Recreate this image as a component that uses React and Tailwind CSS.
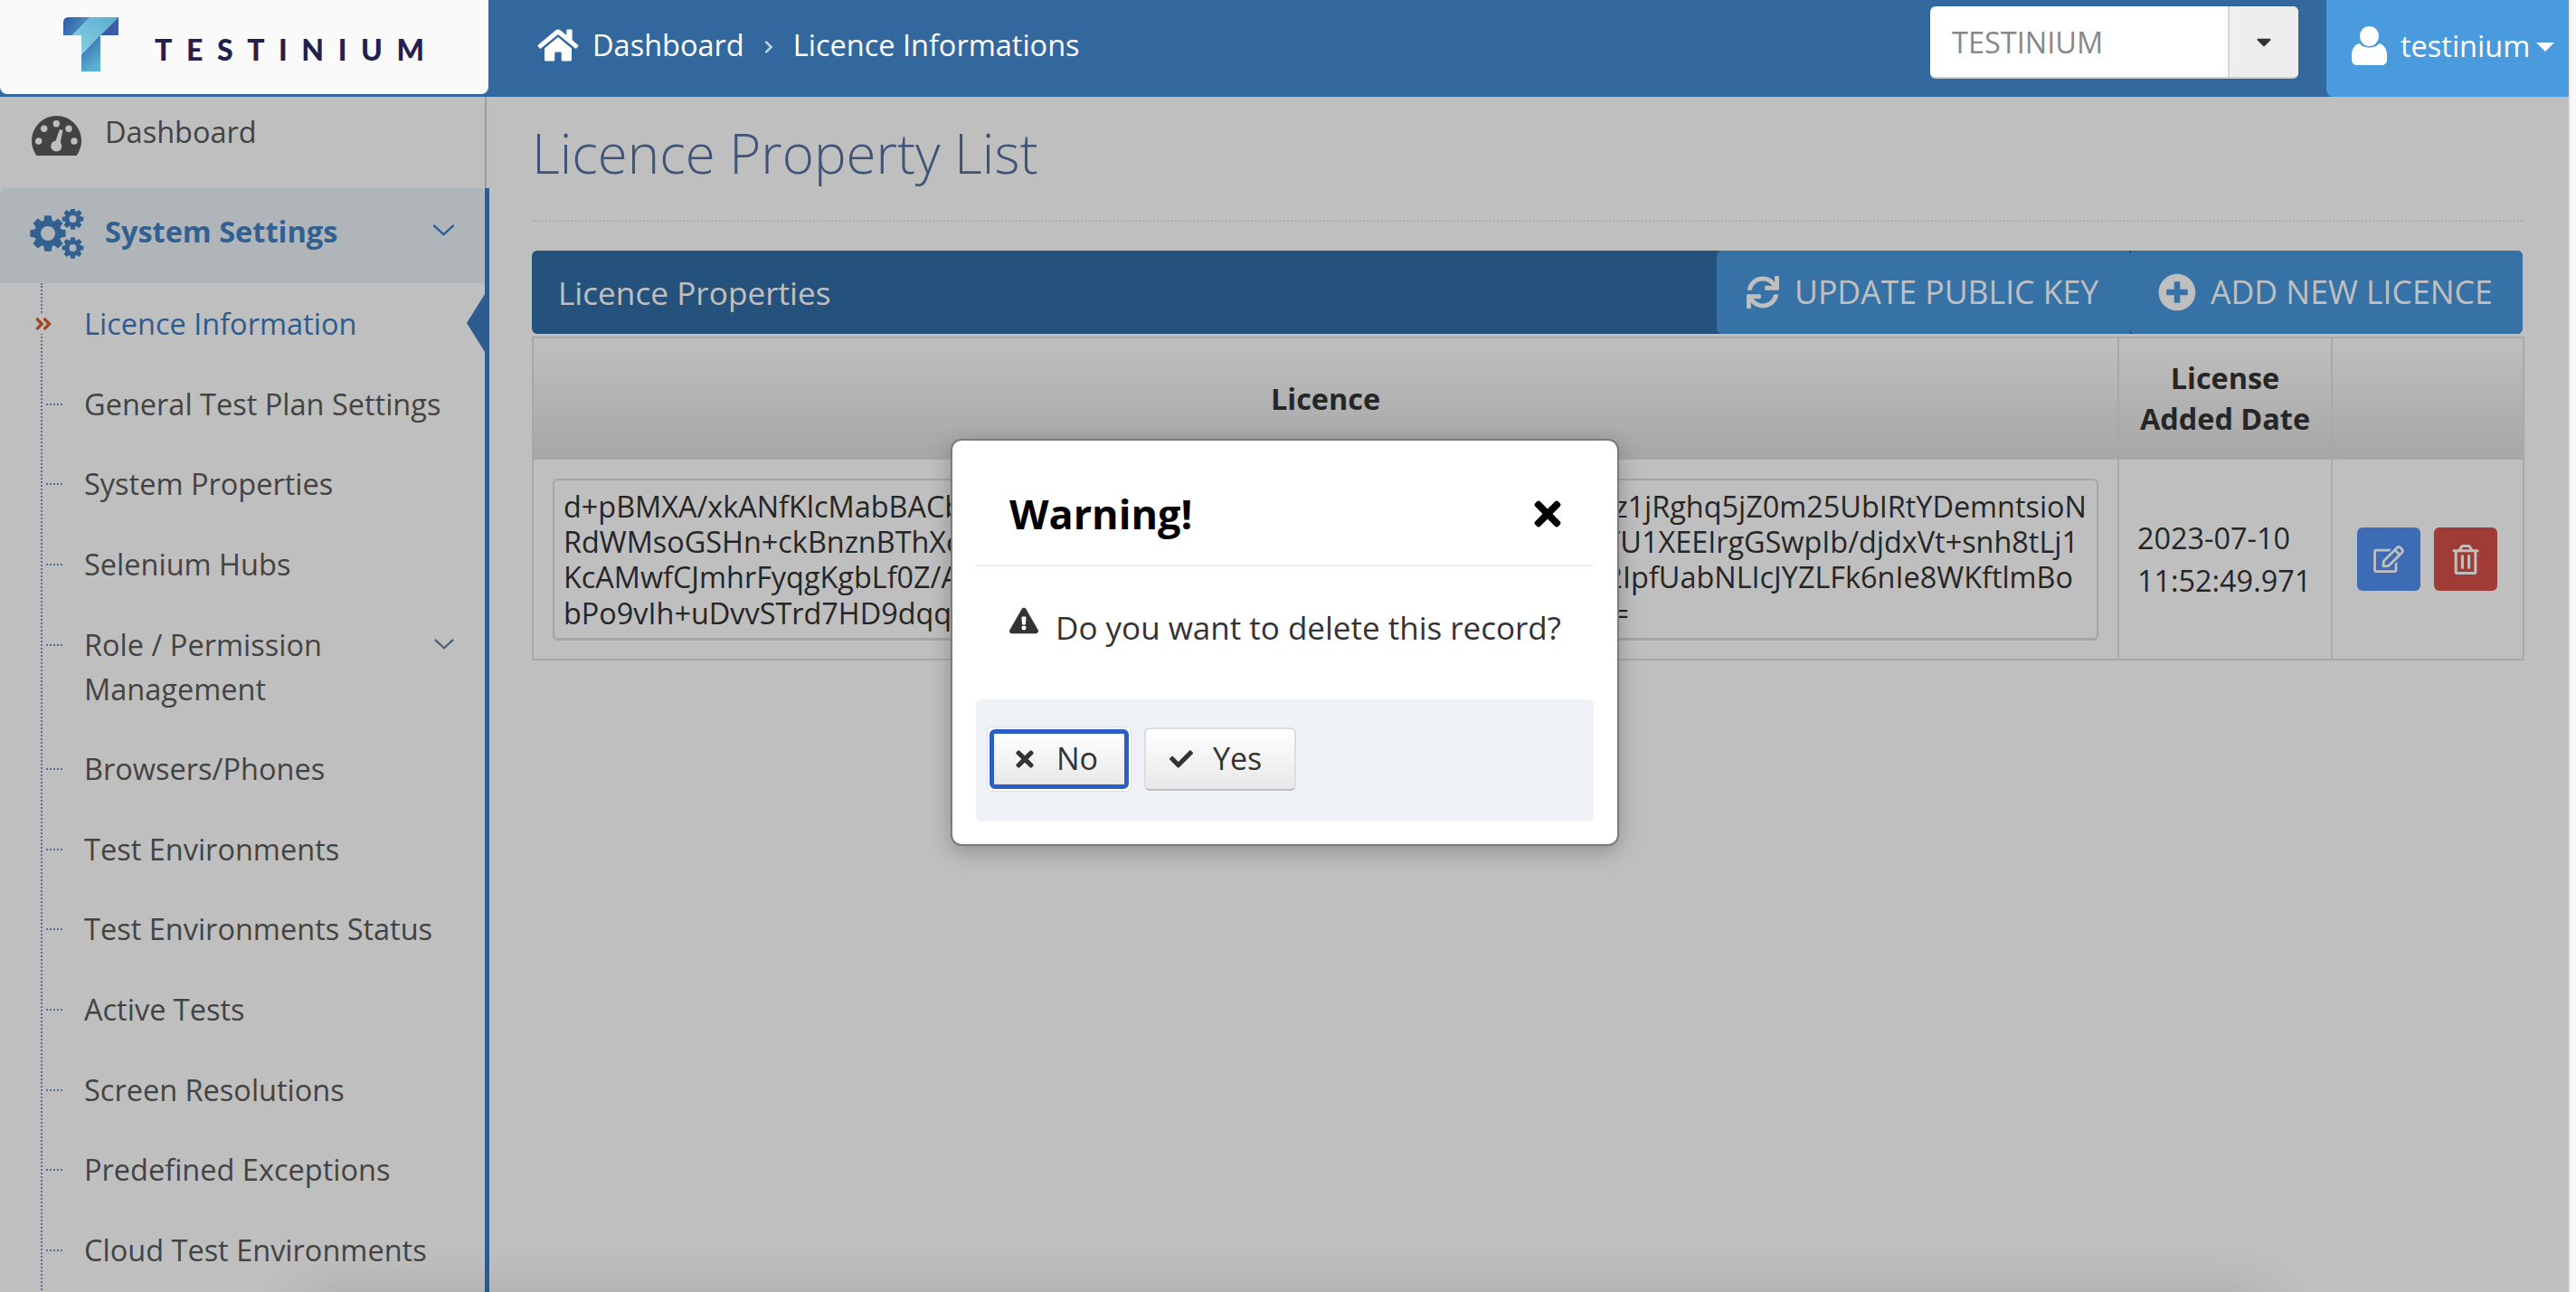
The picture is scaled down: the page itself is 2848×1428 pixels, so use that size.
import React from "react";
import {
  FaHome, FaSync, FaPlusCircle, FaRegEdit, FaRegTrashAlt,
  FaExclamationTriangle, FaTimes, FaCheck, FaChevronRight, FaCaretDown, FaAngleDoubleRight,
} from "react-icons/fa";

const items = [
  ["General Test Plan Settings"],
  ["System Properties"],
  ["Selenium Hubs"],
  ["Role / Permission Management", true],
  ["Browsers/Phones"],
  ["Test Environments"],
  ["Test Environments Status"],
  ["Active Tests"],
  ["Screen Resolutions"],
  ["Predefined Exceptions"],
  ["Cloud Test Environments"],
];

const keyLines = [
  ["d+pBMXA/xkANfKlcMabBACb", "z1jRghq5jZ0m25UbIRtYDemntsioN", "pr-[11px]"],
  ["RdWMsoGSHn+ckBnznBThXc", "TU1XEEIrgGSwpIb/djdxVt+snh8tLj1", "pr-[20px]"],
  ["KcAMwfCJmhrFyqgKgbLf0Z/A", "2IpfUabNLIcJYZLFk6nIe8WKftlmBo", "pr-[26px]"],
  ["bPo9vIh+uDvvSTrd7HD9dqq", "=", "pr-[517px]"],
];

function gearPath(cx, cy, ro, ri, hole, teeth) {
  const pts = [];
  const step = (Math.PI * 2) / teeth;
  for (let i = 0; i < teeth; i++) {
    const a = i * step - Math.PI / 2;
    [
      [ri, -0.5],
      [ro, -0.3],
      [ro, 0.3],
      [ri, 0.5],
    ].forEach(([r, k]) => {
      const t = a + k * step * 0.8;
      pts.push((cx + r * Math.cos(t)).toFixed(2) + " " + (cy + r * Math.sin(t)).toFixed(2));
    });
  }
  return (
    "M" + pts.join("L") + "Z" +
    `M${cx - hole} ${cy}a${hole} ${hole} 0 1 0 ${hole * 2} 0a${hole} ${hole} 0 1 0 ${-hole * 2} 0Z`
  );
}

function CogsIcon({ className }) {
  return (
    <svg viewBox="0 0 60 55" className={className} fill="currentColor" fillRule="evenodd">
      <path d={gearPath(20, 27, 20, 15, 8, 8)} />
      <path d={gearPath(47.5, 11, 12, 9, 4, 8)} />
      <path d={gearPath(47.5, 43, 12, 9, 4, 8)} />
    </svg>
  );
}

function GaugeIcon({ className }) {
  return (
    <svg viewBox="0 0 55 44" className={className}>
      <path d="M5.5 44 A27.5 27.5 0 1 1 49.5 44 Z" fill="currentColor" />
      <g fill="#ffffff">
        <circle cx="7.7" cy="28" r="3.7" />
        <circle cx="13.7" cy="14.3" r="3.7" />
        <circle cx="27.3" cy="8.7" r="3.7" />
        <circle cx="41" cy="14.3" r="3.7" />
        <circle cx="47" cy="28" r="3.7" />
        <circle cx="27.3" cy="33.5" r="6" />
        <path d="M31 15 L34.5 16 L31 33 L25 32 Z" />
      </g>
    </svg>
  );
}

function Chevron({ className }) {
  return (
    <svg viewBox="0 0 26 14" className={className} fill="none" stroke="currentColor" strokeWidth="2.6">
      <path d="M1 1 L13 12 L25 1" />
    </svg>
  );
}

function Logo() {
  return (
    <svg viewBox="0 0 61 60" className="w-[61px] h-[60px] shrink-0">
      <defs>
        <linearGradient id="a" x1="0" y1="0" x2="1" y2="0.4">
          <stop offset="0" stopColor="#2f55a5" />
          <stop offset="1" stopColor="#4d9cc6" />
        </linearGradient>
        <linearGradient id="b" x1="0" y1="1" x2="1" y2="0">
          <stop offset="0" stopColor="#8fcfe2" />
          <stop offset="1" stopColor="#58aed0" />
        </linearGradient>
        <linearGradient id="c" x1="0" y1="0" x2="0.4" y2="1">
          <stop offset="0" stopColor="#3560a9" />
          <stop offset="1" stopColor="#58b2d2" />
        </linearGradient>
      </defs>
      <path d="M6 0 H30 L10 20 H0 V6 Q0 0 6 0 Z" fill="url(#a)" />
      <polygon points="30,0 61,0 41,20 41,21 20,40 20,20 10,20" fill="url(#b)" />
      <polygon points="61,0 61,20 41,20" fill="#3a5ca9" />
      <polygon points="41,20 41,60 20,60 20,41" fill="url(#c)" />
    </svg>
  );
}

function UserIcon() {
  return (
    <svg viewBox="0 0 39 43" className="w-[39px] h-[43px]" fill="white">
      <ellipse cx="19.5" cy="11" rx="10.5" ry="11" />
      <path d="M9 19 C12 25 27 25 30 19 C35 20 39 24 39 32 V37 C39 41 36 43 33 43 H6 C3 43 0 41 0 37 V32 C0 24 4 20 9 19 Z" />
    </svg>
  );
}

export default function App() {
  return (
    <div className="relative flex w-[2848px] h-[1428px] overflow-hidden bg-white font-['Open_Sans',sans-serif]">
      <div className="w-[2840px] shrink-0 flex flex-col">
        {/* Top bar */}
        <header className="relative z-20 flex h-[107px] shrink-0 bg-[#33689e] text-white">
          <div className="w-[540px] h-[104px] shrink-0 flex items-start pl-[70px] pt-[19px] bg-[#fafafa] rounded-b-lg">
            <Logo />
            <span className="ml-[40px] mt-[18px] text-[32px] leading-[36px] font-black tracking-[15.6px] text-[#231f4e] font-['Lato',sans-serif]">
              TESTINIUM
            </span>
          </div>
          <nav className="flex items-center h-[100px] pl-[54px] text-[32.5px]">
            <FaHome className="w-[46px] h-[40px] mr-[15px]" />
            <span>Dashboard</span>
            <FaChevronRight className="w-[14px] h-[16px] mx-[20px] mt-[4px] text-[#c6d4e3]" />
            <span>Licence Informations</span>
          </nav>
          <div className="ml-auto mt-[7px] w-[407px] h-[80px] flex rounded-md bg-white border-b-2 border-[#cccccc] overflow-hidden">
            <span className="flex-1 pl-[24px] leading-[80px] text-[32.5px] text-[#888888]">TESTINIUM</span>
            <span className="w-[78px] flex items-center justify-center bg-[#eeeeee] border-l-2 border-[#d8d8d8]">
              <FaCaretDown className="w-[26px] h-[26px] text-[#333333]" />
            </span>
          </div>
          <div className="ml-[31px] w-[268px] flex items-start pl-[28px] pt-[29px] bg-[#4a9bde] rounded-bl-lg">
            <UserIcon />
            <span className="ml-[15px] text-[32.5px] leading-[44px]">testinium</span>
            <span className="ml-[7px] mt-[18px] w-0 h-0 border-x-[10px] border-t-[10px] border-x-transparent border-t-white" />
          </div>
        </header>

        <div className="flex flex-1 min-h-0">
          {/* Sidebar */}
          <aside className="w-[541px] shrink-0 text-[32.5px] leading-[49px] text-[#5a5a5a]">
            <div className="flex h-[101px] pl-[35px] pt-[14px] border-r-2 border-r-[#d0d0d0] mr-[3px]">
              <GaugeIcon className="w-[55px] h-[44px] mt-[7px] text-[#5a5a5a]" />
              <span className="ml-[26px]">Dashboard</span>
            </div>
            <div className="border-r-[5px] border-[#3f7bc0] h-full">
              <div className="flex items-center h-[105px] pl-[33px] pr-[33px] bg-[#ebf2f8] rounded-t-md text-[#4280c2]">
                <CogsIcon className="w-[60px] h-[55px] -mt-[5px]" />
                <span className="ml-[23px] -mt-[10px] font-bold flex-1">System Settings</span>
                <Chevron className="w-[25px] h-[13px] -mt-[12px]" />
              </div>
              <ul className="relative ml-[45px] border-l-2 border-dotted border-[#6f94c4]">
                <li className="relative flex items-center h-[89px] py-[20px] text-[#3f7bc0]">
                  <FaAngleDoubleRight className="absolute left-[-10px] w-[22px] h-[22px] bg-white text-[#d95f30]" />
                  <span className="ml-[46px]">Licence Information</span>
                  <span className="absolute right-0 top-[12px] w-0 h-0 border-y-[32px] border-r-[20px] border-y-transparent border-r-[#3f7bc0]" />
                </li>
                {items.map(([label, sub]) => (
                  <li key={label} className="flex items-start py-[19.8px]">
                    <span className="w-[18px] ml-[4px] mt-[24px] border-t-2 border-dotted border-[#6f94c4] shrink-0" />
                    <span className="ml-[24px] flex-1 whitespace-normal">{label}</span>
                    {sub && <Chevron className="w-[22px] h-[12px] mt-[18px] ml-[60px] mr-[34px] shrink-0 text-[#6b8199]" />}
                  </li>
                ))}
              </ul>
            </div>
          </aside>

          {/* Content */}
          <main className="flex-1 min-w-0 pl-[47px] pr-[51px]">
            <h1 className="pt-[32px] pb-[44px] text-[60px] leading-[60px] font-light text-[#54719f] border-b-2 border-dotted border-[#e4e4e4]">
              Licence Property List
            </h1>
            <div className="mt-[32px] flex h-[92px] items-stretch bg-[#326ca7] rounded-md text-[35.6px] text-white">
              <span className="flex-1 pl-[29px] leading-[92px] text-[35.2px]">Licence Properties</span>
              <span className="w-[456px] flex items-center pl-[33px] bg-[#4898dd] rounded-l-md">
                <FaSync className="w-[36px] h-[36px] mr-[17px]" />
                UPDATE PUBLIC KEY
              </span>
              <span className="w-[435px] flex items-center pl-[32px] bg-[#4898dd] rounded-md">
                <FaPlusCircle className="w-[42px] h-[42px] mr-[16px]" />
                ADD NEW LICENCE
              </span>
            </div>
            <table className="mt-[3px] w-[2201px] table-fixed border-collapse text-[#333333] text-[32.4px]">
              <colgroup>
                <col className="w-[1753px]" />
                <col className="w-[236px]" />
                <col className="w-[212px]" />
              </colgroup>
              <thead>
                <tr className="h-[134px]">
                  {["Licence", "License Added Date", ""].map((h) => (
                    <th key={h} className="px-[18px] text-center font-bold leading-[45px] border-2 border-[#e0e0e0] rounded-t-md bg-linear-to-b from-[#ffffff] to-[#dfdfdf]">
                      {h}
                    </th>
                  ))}
                </tr>
              </thead>
              <tbody>
                <tr className="h-[222px]">
                  <td className="px-[21px] border-2 border-[#e0e0e0]">
                    <div className="h-[179px] pl-[10px] pt-[9px] border-2 border-b-[3px] border-[#dcdcdc] rounded-md leading-[39.4px] whitespace-nowrap">
                      {keyLines.map(([a, b, pr]) => (
                        <div key={a} className={"flex justify-between " + pr}>
                          <span>{a}</span>
                          <span>{b}</span>
                        </div>
                      ))}
                    </div>
                  </td>
                  <td className="px-[20px] border-2 border-[#e0e0e0] leading-[47px] whitespace-nowrap">
                    2023-07-10<br />11:52:49.971
                  </td>
                  <td className="border-2 border-[#e0e0e0]">
                    <div className="flex justify-center gap-[15px] pr-[2px] text-white">
                      <span className="w-[70px] h-[70px] flex items-center justify-center rounded-md bg-[#5291f1]">
                        <FaRegEdit className="w-[36px] h-[30px]" />
                      </span>
                      <span className="w-[70px] h-[70px] flex items-center justify-center rounded-md bg-[#d55047]">
                        <FaRegTrashAlt className="w-[30px] h-[33px]" />
                      </span>
                    </div>
                  </td>
                </tr>
              </tbody>
            </table>
          </main>
        </div>
      </div>
      {/* Scrollbar track */}
      <div className="flex-1 bg-[#f9f9f9] border-l-2 border-[#ececec]" />

      {/* Backdrop */}
      <div className="absolute z-10 left-0 top-[107px] w-[2840px] bottom-0 bg-black/25 overflow-hidden">
        <div className="absolute left-[340px] top-[1330px] w-[2160px] h-[40px] shadow-[0_0_60px_rgba(0,0,0,0.18)]" />
      </div>

      {/* Dialog */}
      <div className="absolute z-30 left-[1051px] top-[485px] w-[739px] h-[450px] px-[26px] bg-white rounded-xl border-2 border-[#7a7a7a] shadow-[0_6px_24px_rgba(0,0,0,0.25)] text-[#333333]">
        <div className="flex items-center justify-between h-[139px] pl-[37px] pr-[32px] pt-[24px] border-b-2 border-[#f0f0f0]">
          <span className="text-[45px] font-bold text-black">Warning!</span>
          <FaTimes className="w-[38px] h-[42px] text-black" />
        </div>
        <div className="flex items-center h-[147px] pl-[37px] text-[35px]">
          <FaExclamationTriangle className="w-[32px] h-[30px] -mt-[28px] mr-[19px]" />
          <span className="-mt-[11px]">Do you want to delete this record?</span>
        </div>
        <div className="flex items-center gap-[14px] h-[135px] pl-[12px] pb-[4px] bg-[#eff2f7] rounded-md text-[34px]">
          <button className="w-[160px] h-[72px] p-[2px] rounded-md bg-white border border-[#dddddd]">
            <span className="flex items-center h-full pl-[21px] rounded-md border-[5px] border-[#2a5fc4] bg-linear-to-b from-[#ffffff] to-[#e8e8e8]">
              <FaTimes className="w-[26px] h-[28px] mr-[22px]" />
              No
            </span>
          </button>
          <button className="w-[168px] h-[70px] flex items-center pl-[24px] rounded-md border-2 border-[#dddddd] border-b-[#bdbdbd] bg-linear-to-b from-[#ffffff] to-[#e8e8e8]">
            <FaCheck className="w-[30px] h-[26px] mr-[20px]" />
            Yes
          </button>
        </div>
      </div>
    </div>
  );
}
